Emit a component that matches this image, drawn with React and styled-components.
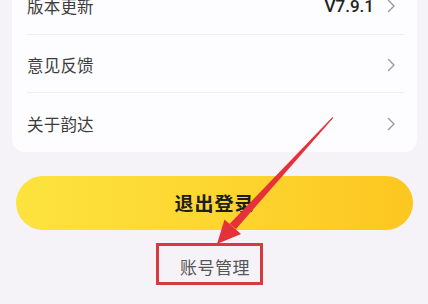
import React from "react";
import styled, { createGlobalStyle } from "styled-components";

const Global = createGlobalStyle`
  html, body { margin: 0; padding: 0; }
  body {
    background: #f5f3f7;
    font-family: "Noto Sans CJK SC", "Noto Sans", sans-serif;
    overflow: hidden;
  }
`;

const Page = styled.div`
  position: relative;
  width: 428px;
  height: 304px;
  overflow: hidden;
  display: flex;
  flex-direction: column;
  align-items: stretch;
`;

const Card = styled.div`
  margin: -23px 11px 0 12px;
  background: #fdfcfe;
  border-radius: 0 0 13px 13px;
  padding: 0 13px 0 15px;
  display: flex;
  flex-direction: column;
`;

const Row = styled.div`
  height: ${(p) => p.$h}px;
  display: flex;
  align-items: center;
  justify-content: space-between;
  border-bottom: ${(p) => (p.$last ? "none" : "1px solid #efedf1")};
  box-sizing: border-box;
  padding-top: ${(p) => p.$pt || 0}px;
`;

const Label = styled.span`
  font-size: 16.5px;
  color: #3c3c3c;
  letter-spacing: 0.2px;
`;

const Right = styled.div`
  display: flex;
  align-items: center;
  gap: 13px;
  margin-right: 8px;
`;

const Version = styled.span`
  font-family: "Roboto", "Noto Sans", sans-serif;
  font-size: 17px;
  font-weight: 500;
  color: #222;
`;

const ChevronBox = styled.span`
  display: flex;
  margin-right: ${(p) => p.$mr || 0}px;
`;

const Chevron = ({ mr }) => (
  <ChevronBox $mr={mr}>
    <svg width="9" height="14" viewBox="0 0 9 14">
      <path d="M1.5 1.5 L7 7 L1.5 12.5" fill="none" stroke="#9a9a9a" strokeWidth="1.4" strokeLinecap="round" strokeLinejoin="round" />
    </svg>
  </ChevronBox>
);

const LogoutButton = styled.div`
  margin: 24px 15px 0 16px;
  height: 54px;
  border-radius: 27px;
  background: linear-gradient(90deg, #fde33f 0%, #fdd630 50%, #fdc620 100%);
  display: flex;
  align-items: center;
  justify-content: center;
  font-size: 19px;
  font-weight: 700;
  color: #1e1e1e;
  letter-spacing: 1px;
  padding-bottom: 2px;
  box-sizing: border-box;
`;

const Footer = styled.div`
  margin-top: 25px;
  display: flex;
  justify-content: center;
  position: relative;
`;

const Account = styled.span`
  font-size: 17px;
  color: #555;
  letter-spacing: 0.5px;
  line-height: 24px;
  position: relative;
  left: 1px;
`;

const Highlight = styled.div`
  position: absolute;
  left: 156px;
  top: 243px;
  width: 107px;
  height: 42px;
  box-sizing: border-box;
  border: 3px solid #d8393f;
`;

const Overlay = styled.svg`
  position: absolute;
  left: 0;
  top: 0;
  pointer-events: none;
`;

export default function App() {
  return (
    <Page>
      <Global />
      <Card>
        <Row $h={58}>
          <Label>版本更新</Label>
          <Right>
            <Version>V7.9.1</Version>
            <Chevron />
          </Right>
        </Row>
        <Row $h={58} $pt={3}>
          <Label>意见反馈</Label>
          <Chevron mr={8} />
        </Row>
        <Row $h={59} $last $pt={2}>
          <Label>关于韵达</Label>
          <Chevron mr={8} />
        </Row>
      </Card>
      <LogoutButton>退出登录</LogoutButton>
      <Footer>
        <Account>账号管理</Account>
      </Footer>
      <Highlight />
      <Overlay width="428" height="304" viewBox="0 0 428 304">
        <polygon points="332.5,117 333.2,118 236,229 229.5,224" fill="#e5323a" />
        <polygon points="217,244 224.5,219.5 241,234" fill="#e5323a" />
      </Overlay>
    </Page>
  );
}
